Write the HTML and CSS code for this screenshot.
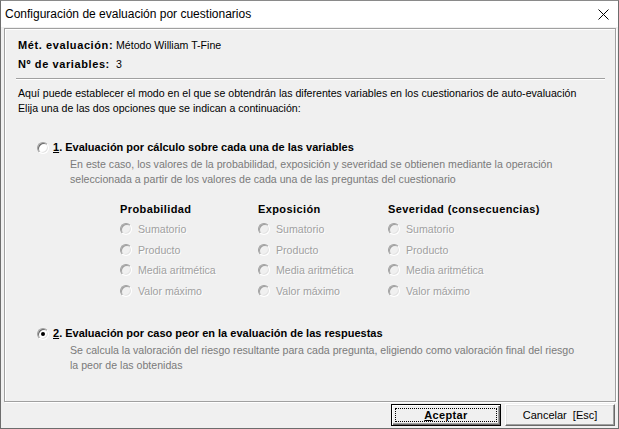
FILE: index.html
```html
<!DOCTYPE html>
<html lang="es">
<head>
<meta charset="utf-8">
<title>Configuración de evaluación por cuestionarios</title>
<link rel="stylesheet" href="styles.css">
</head>
<body>
<div class="window">
  <div class="titlebar">
    <span class="title">Configuración de evaluación por cuestionarios</span>
    <svg class="close" width="11" height="11" viewBox="0 0 11 11"><path d="M0.5 0.5 L10.5 10.5 M10.5 0.5 L0.5 10.5" stroke="#000" stroke-width="1" fill="none"/></svg>
  </div>
  <div class="client">
    <div class="panel">
      <div class="info">
        <div class="info-row"><span class="info-key">Mét. evaluación:</span><span class="info-val">Método William T-Fine</span></div>
        <div class="info-row"><span class="info-key">Nº de variables:</span><span class="info-val">3</span></div>
      </div>
      <div class="sep"></div>
      <div class="intro">
        <div>Aquí puede establecer el modo en el que se obtendrán las diferentes variables en los cuestionarios de auto-evaluación</div>
        <div>Elija una de las dos opciones que se indican a continuación:</div>
      </div>

      <div class="option opt1">
        <div class="opt-head"><span class="radio"></span><span class="opt-title"><u>1</u>. Evaluación por cálculo sobre cada una de las variables</span></div>
        <div class="opt-desc">En este caso, los valores de la probabilidad, exposición y severidad se obtienen mediante la operación<br>seleccionada a partir de los valores de cada una de las preguntas del cuestionario</div>
      </div>

      <div class="cols">
        <div class="col c1">
          <div class="col-head">Probabilidad</div>
          <div class="sub"><span class="radio dis"></span><span class="dis-label">Sumatorio</span></div>
          <div class="sub"><span class="radio dis"></span><span class="dis-label">Producto</span></div>
          <div class="sub"><span class="radio dis"></span><span class="dis-label">Media aritmética</span></div>
          <div class="sub"><span class="radio dis"></span><span class="dis-label">Valor máximo</span></div>
        </div>
        <div class="col c2">
          <div class="col-head">Exposición</div>
          <div class="sub"><span class="radio dis"></span><span class="dis-label">Sumatorio</span></div>
          <div class="sub"><span class="radio dis"></span><span class="dis-label">Producto</span></div>
          <div class="sub"><span class="radio dis"></span><span class="dis-label">Media aritmética</span></div>
          <div class="sub"><span class="radio dis"></span><span class="dis-label">Valor máximo</span></div>
        </div>
        <div class="col c3">
          <div class="col-head">Severidad (consecuencias)</div>
          <div class="sub"><span class="radio dis"></span><span class="dis-label">Sumatorio</span></div>
          <div class="sub"><span class="radio dis"></span><span class="dis-label">Producto</span></div>
          <div class="sub"><span class="radio dis"></span><span class="dis-label">Media aritmética</span></div>
          <div class="sub"><span class="radio dis"></span><span class="dis-label">Valor máximo</span></div>
        </div>
      </div>

      <div class="option opt2">
        <div class="opt-head"><span class="radio checked"></span><span class="opt-title"><u>2</u>. Evaluación por caso peor en la evaluación de las respuestas</span></div>
        <div class="opt-desc">Se calcula la valoración del riesgo resultante para cada pregunta, eligiendo como valoración final del riesgo<br>la peor de las obtenidas</div>
      </div>
    </div>
    <div class="footer">
      <button class="btn default"><span class="focus"><u>A</u>ceptar</span></button>
      <button class="btn">Cancelar&nbsp; [Esc]</button>
    </div>
  </div>
</div>
</body>
</html>
```

FILE: styles.css
```css
* { box-sizing: border-box; }
html, body { margin: 0; padding: 0; }
body {
  width: 619px;
  height: 429px;
  overflow: hidden;
  background: #f0f0f0;
  font-family: "Liberation Sans", Arial, sans-serif;
  font-size: 10.6px;
  color: #000;
}
.window {
  width: 619px;
  height: 429px;
  border: 1px solid #6d6d6d;
  border-top-color: #8a8a8a;
  display: flex;
  flex-direction: column;
  background: #f0f0f0;
}
.titlebar {
  height: 26px;
  flex: none;
  background: #fff;
  display: flex;
  align-items: center;
  justify-content: space-between;
  padding: 0 9px 0 4px;
}
.title {
  font-family: "Liberation Sans", Arial, sans-serif;
  font-size: 12px;
  color: #000;
}
.close { display: block; margin-top: 1px; }
.client {
  flex: 1;
  padding: 1px 2px 0 3px;
  display: flex;
  flex-direction: column;
}
.panel {
  height: 374px;
  border: 1px solid #a0a0a0;
  box-shadow: inset 1px 1px 0 #fff, 1px 1px 0 #fff;
  padding: 6px 10px 0 13px;
}
.info-row {
  display: flex;
  line-height: 16px;
  height: 19px;
  align-items: center;
}
.info-key {
  font-weight: bold;
  font-size: 11px;
  letter-spacing: 0.6px;
  width: 98px;
  flex: none;
}
.sep {
  height: 2px;
  border-top: 1px solid #a0a0a0;
  border-bottom: 1px solid #fff;
  margin: 5px 0 6px -2px;
}
.intro { line-height: 15px; }
.option { margin-left: 19px; }
.opt1 { margin-top: 24px; }
.opt2 { margin-top: 25px; }
.opt-head {
  display: flex;
  align-items: center;
  line-height: 15px;
}
.opt-head .radio { margin-right: 4px; }
.opt-title {
  font-weight: bold;
  font-size: 11px;
  letter-spacing: 0;
}
.opt-desc {
  color: #7a7a7a;
  line-height: 15px;
  padding-left: 33px;
  margin-top: 2px;
}
.cols {
  display: flex;
  margin-top: 15px;
  padding-left: 102px;
}
.col { flex: none; }
.c1 { width: 138px; }
.c2 { width: 130px; }
.col-head {
  font-weight: bold;
  font-size: 11px;
  letter-spacing: 0.4px;
  line-height: 15px;
  margin-bottom: 2px;
}
.sub {
  display: flex;
  align-items: center;
  height: 20.6px;
}
.sub .radio { margin-right: 6px; }
.dis-label {
  color: #a0a0a0;
  text-shadow: 1px 1px 0 #fff;
}
.radio {
  flex: none;
  position: relative;
  width: 12px;
  height: 12px;
  border-radius: 50%;
  border: 1px solid;
  border-color: #a0a0a0 #fff #fff #a0a0a0;
  background: #fff;
  box-shadow: inset 1px 1px 0 #696969, inset -1px -1px 0 #e3e3e3;
}
.radio.dis {
  background: #f0f0f0;
  box-shadow: inset 1px 1px 0 #a0a0a0, inset -1px -1px 0 #e3e3e3;
}
.radio.checked::after {
  content: "";
  position: absolute;
  left: 3px;
  top: 3px;
  width: 4px;
  height: 4px;
  border-radius: 50%;
  background: #000;
}
.footer {
  flex: 1;
  display: flex;
  justify-content: flex-end;
  align-items: flex-start;
  gap: 4px;
  padding: 2px 1px 0 0;
}
.btn {
  width: 110px;
  height: 22px;
  margin: 0;
  padding: 0;
  font-family: "Liberation Sans", Arial, sans-serif;
  font-size: 11px;
  color: #000;
  background: #f0f0f0;
  border: 1px solid;
  border-color: #fff #696969 #696969 #fff;
  box-shadow: inset -1px -1px 0 #a0a0a0, inset 1px 1px 0 #e3e3e3;
  display: flex;
  align-items: center;
  justify-content: center;
}
.btn.default {
  border: 1px solid #000;
  box-shadow: inset 1px 1px 0 #fff, inset -1px -1px 0 #696969, inset -2px -2px 0 #a0a0a0;
  padding: 3px;
}
.focus {
  flex: 1;
  align-self: stretch;
  display: flex;
  align-items: center;
  justify-content: center;
  border: 1px dotted #000;
  font-weight: bold;
  letter-spacing: 0.35px;
}
```
